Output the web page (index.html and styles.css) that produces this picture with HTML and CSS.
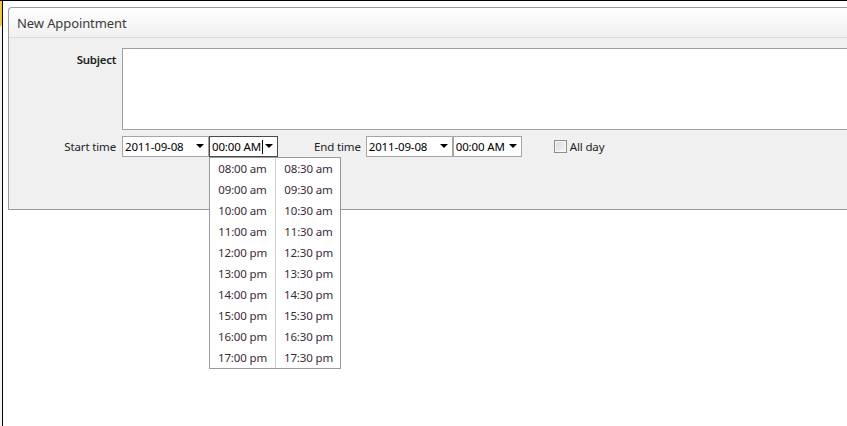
FILE: index.html
```html
<!DOCTYPE html>
<html>
<head>
<meta charset="utf-8">
<link rel="stylesheet" href="styles.css">
</head>
<body>
<div class="frame">
  <div class="strip"><div class="strip-yellow"></div></div>
  <div class="content">
    <div class="panel">
      <div class="panel-header">New Appointment</div>
      <div class="panel-body">
        <div class="row subject-row">
          <div class="label subject-label">Subject</div>
          <div class="textarea"></div>
        </div>
        <div class="row time-row">
          <div class="label">Start time</div>
          <div class="combo date">2011-09-08<span class="arrow"></span></div>
          <div class="combo time focused">
            <span>00:00 AM</span><span class="caret"></span><span class="arrow"></span>
            <div class="dropdown">
              <div class="col">
                <div class="item">08:00 am</div>
                <div class="item">09:00 am</div>
                <div class="item">10:00 am</div>
                <div class="item">11:00 am</div>
                <div class="item">12:00 pm</div>
                <div class="item">13:00 pm</div>
                <div class="item">14:00 pm</div>
                <div class="item">15:00 pm</div>
                <div class="item">16:00 pm</div>
                <div class="item">17:00 pm</div>
              </div>
              <div class="col col2">
                <div class="item">08:30 am</div>
                <div class="item">09:30 am</div>
                <div class="item">10:30 am</div>
                <div class="item">11:30 am</div>
                <div class="item">12:30 pm</div>
                <div class="item">13:30 pm</div>
                <div class="item">14:30 pm</div>
                <div class="item">15:30 pm</div>
                <div class="item">16:30 pm</div>
                <div class="item">17:30 pm</div>
              </div>
            </div>
          </div>
          <div class="label end-label">End time</div>
          <div class="combo date">2011-09-08<span class="arrow"></span></div>
          <div class="combo time">00:00 AM<span class="arrow"></span></div>
          <div class="allday"><span class="checkbox"></span>All day</div>
        </div>
      </div>
    </div>
  </div>
</div>
</body>
</html>
```
FILE: styles.css
```css
html, body {
  margin: 0;
  padding: 0;
  background: #ffffff;
  overflow: hidden;
}
body {
  width: 847px;
  height: 426px;
  font-family: "Noto Sans", "Open Sans", sans-serif;
  font-size: 11.5px;
  letter-spacing: -0.15px;
  color: #1e1e1e;
}
.frame {
  display: flex;
  height: 426px;
  border-top: 1px solid #000;
  box-sizing: border-box;
}
.strip {
  width: 2px;
  flex: none;
  background: #f4f4f4;
  border-right: 1px solid #000;
}
.strip-yellow {
  height: 25px;
  background: #f8c828;
}
.content {
  flex: 1;
  padding: 6px 0 0 5px;
  min-width: 0;
}
.panel {
  border: 1px solid #9a9a9a;
  border-right: none;
  border-top-left-radius: 4px;
  background: #f0f0f0;
  margin-right: -20px;
}
.panel-header {
  height: 30px;
  box-sizing: border-box;
  border-bottom: 1px solid #dcdcdc;
  border-top-left-radius: 4px;
  background: linear-gradient(#ffffff, #f0f0f0);
  padding: 6px 0 0 8px;
  font-size: 13px;
  letter-spacing: -0.1px;
  color: #3a3a3a;
}
.panel-body {
  height: 171px;
  box-sizing: border-box;
  padding-top: 10px;
}
.row {
  display: flex;
  align-items: flex-start;
}
.label {
  width: 113px;
  flex: none;
  text-align: right;
  padding-right: 6px;
  box-sizing: border-box;
  color: #1e1e1e;
}
.subject-label {
  font-weight: 600;
  letter-spacing: -0.3px;
  color: #222;
  padding-top: 4px;
}
.textarea {
  flex: 1;
  height: 82px;
  box-sizing: border-box;
  border: 1px solid #a0a0a0;
  background: #fff;
}
.time-row {
  margin-top: 6px;
  align-items: center;
}
.time-row .label {
  line-height: 21px;
}
.combo {
  position: relative;
  height: 21px;
  box-sizing: border-box;
  border: 1px solid #a5a5a5;
  background: #fff;
  padding: 0 0 0 2px;
  line-height: 19px;
  display: flex;
  align-items: center;
  color: #000;
  flex: none;
}
.combo.date {
  width: 87px;
}
.combo.time {
  width: 69px;
  margin-left: 0;
}
.combo.focused {
  border-color: #4a4a4a;
}
.arrow {
  position: absolute;
  right: 4px;
  top: 7px;
  width: 0;
  height: 0;
  border-left: 4px solid transparent;
  border-right: 4px solid transparent;
  border-top: 4px solid #000;
}
.caret {
  display: inline-block;
  width: 1px;
  height: 14px;
  background: #000;
  margin-left: 1px;
}
.end-label {
  width: auto;
  padding-left: 36px;
  padding-right: 5px;
}
.allday {
  display: flex;
  align-items: center;
  margin-left: 32px;
  color: #1e1e1e;
}
.checkbox {
  width: 13px;
  height: 13px;
  box-sizing: border-box;
  border: 1px solid #8e8e8e;
  background: linear-gradient(135deg, #dcdcdc, #f4f4f4);
  box-shadow: inset 0 0 0 1px #f6f6f6;
  margin-right: 3px;
}
.dropdown {
  position: absolute;
  left: -1px;
  top: 20px;
  width: 132px;
  height: 212px;
  box-sizing: border-box;
  border: 1px solid #9a9a9a;
  background: #fff;
  display: flex;
  z-index: 5;
}
.col {
  width: 65px;
  flex: none;
}
.col2 {
  width: 65px;
  border-left: 1px solid #d0d0d0;
}
.item {
  height: 21px;
  line-height: 21px;
  text-align: center;
  color: #3a2a3a;
}
```
